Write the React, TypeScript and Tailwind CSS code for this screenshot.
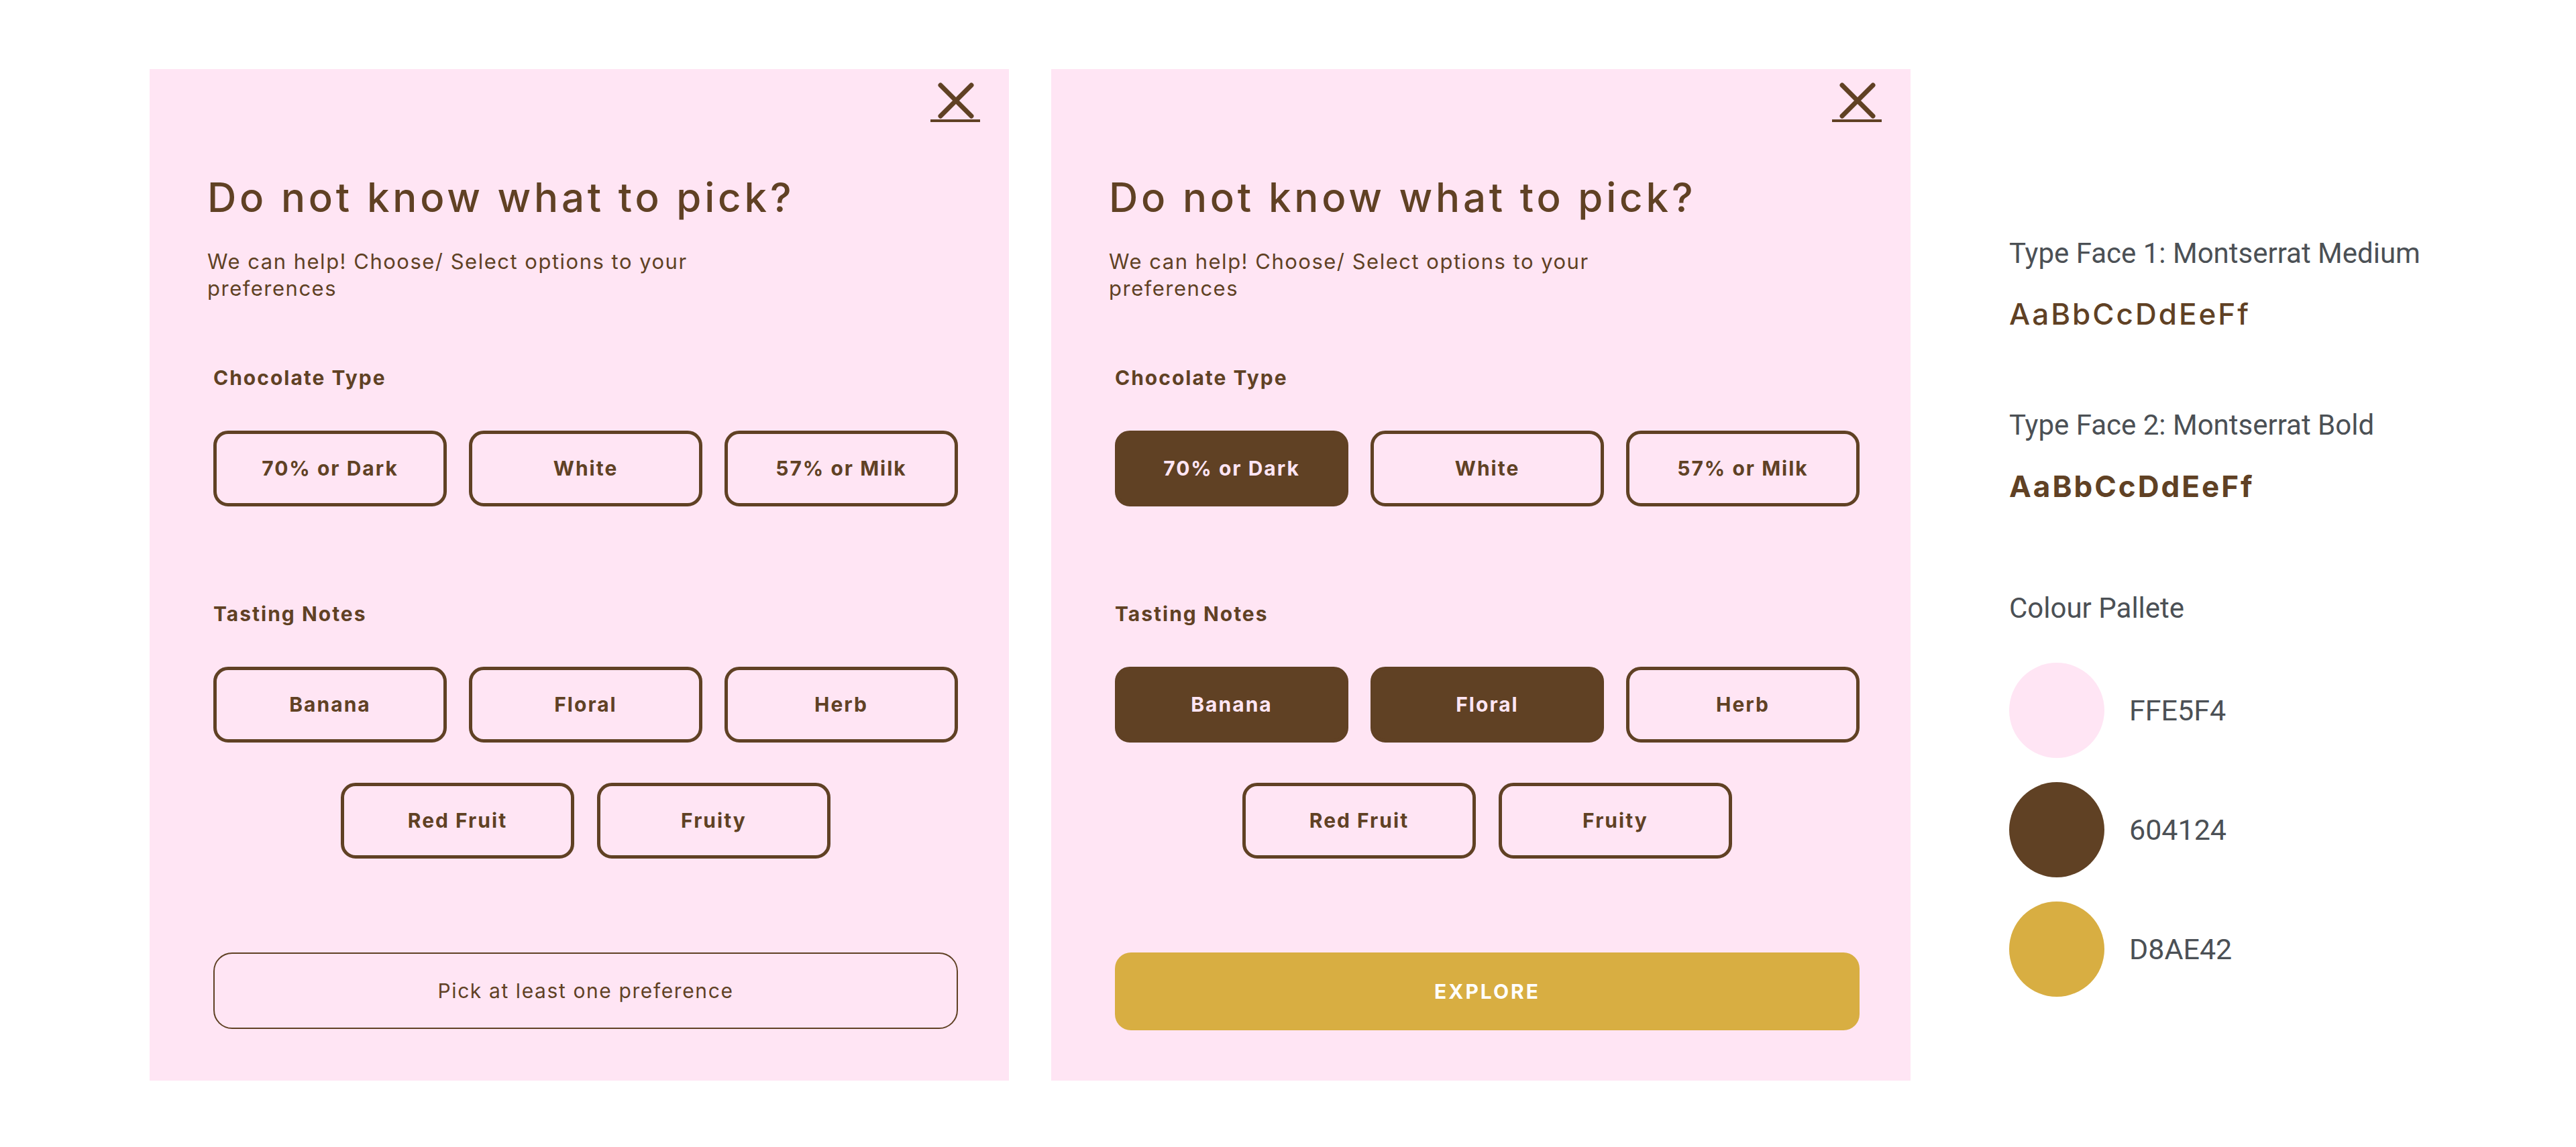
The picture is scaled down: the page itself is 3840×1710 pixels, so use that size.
import clsx from "clsx";

const chocolateTypes = ["70% or Dark", "White", "57% or Milk"];
const notesTop = ["Banana", "Floral", "Herb"];
const notesBottom = ["Red Fruit", "Fruity"];

const CloseIcon = () => (
  <svg width="76" height="61" viewBox="0 0 76 61" fill="none">
    <path d="M16 5 L62 51 M62 5 L16 51" stroke="#604124" strokeWidth="7" strokeLinecap="round" />
    <rect x="1" y="56" width="74" height="4" fill="#604124" />
  </svg>
);

const Option = ({ label, selected }: { label: string; selected?: boolean }) => (
  <button
    className={clsx(
      "h-[113px] w-[348px] rounded-[22px] border-[5px] border-[#604124] text-[30px] font-bold tracking-[2px]",
      selected ? "bg-[#604124] text-[#ffe5f4]" : "text-[#604124]"
    )}
  >
    {label}
  </button>
);

const Panel = ({ picked }: { picked: string[] }) => {
  const hasPick = picked.length > 0;

  return (
    <div className="flex w-[1281px] flex-col bg-[#ffe5f4] pt-[19px] pb-[75px] pl-[86px] pr-[42px] font-['Inter',sans-serif] text-[#604124]">
      {/* close */}
      <div className="flex justify-end">
        <CloseIcon />
      </div>

      <div className="pr-[34px]">
        <h1 className="mt-[81px] text-[60px] leading-[60px] font-medium tracking-[4.8px]">Do not know what to pick?</h1>
        <p className="mt-[46px] text-[31px] leading-[40px] tracking-[1.5px]">
          We can help! Choose/ Select options to your
          <br />
          preferences
        </p>

        <div className="pl-[9px]">
          <h2 className="mt-[98px] text-[30px] leading-[30px] font-bold tracking-[2px]">Chocolate Type</h2>
          <div className="mt-[64px] grid grid-cols-3 gap-[33px]">
            {chocolateTypes.map((c) => (
              <Option key={c} label={c} selected={picked.includes(c)} />
            ))}
          </div>

          <h2 className="mt-[145px] text-[30px] leading-[30px] font-bold tracking-[2px]">Tasting Notes</h2>
          <div className="mt-[64px] grid grid-cols-3 gap-[33px]">
            {notesTop.map((n) => (
              <Option key={n} label={n} selected={picked.includes(n)} />
            ))}
          </div>
          <div className="mt-[60px] flex justify-center gap-[34px]">
            {notesBottom.map((n) => (
              <Option key={n} label={n} selected={picked.includes(n)} />
            ))}
          </div>

          {hasPick ? (
            <button className="mt-[140px] h-[116px] w-full rounded-[24px] bg-[#d8ae42] text-[30px] font-bold tracking-[3px] text-white">
              EXPLORE
            </button>
          ) : (
            <button className="mt-[140px] h-[114px] w-full rounded-[28px] border-2 border-[#604124] text-[30px] tracking-[1.6px]">
              Pick at least one preference
            </button>
          )}
        </div>
      </div>
    </div>
  );
};

const Swatch = ({ color, code }: { color: string; code: string }) => (
  <div className="flex items-center gap-[37px]">
    <div className={clsx("h-[142px] w-[142px] rounded-full", color)} />
    <span className="text-[43px] leading-none">{code}</span>
  </div>
);

export default function App() {
  return (
    <div className="flex min-h-[1710px] w-[3840px] items-start bg-white pt-[103px] pl-[223px]">
      <div className="flex gap-[63px]">
        <Panel picked={[]} />
        <Panel picked={["70% or Dark", "Banana", "Floral"]} />
      </div>

      {/* style guide */}
      <div className="ml-[147px] flex flex-col pt-[253px] font-['Roboto',sans-serif] text-[#4b5055]">
        <div className="text-[42px] leading-[44px]">Type Face 1: Montserrat Medium</div>
        <div className="mt-[46px] font-['Inter',sans-serif] text-[44px] leading-[44px] font-medium tracking-[3px] text-[#604124]">
          AaBbCcDdEeFf
        </div>
        <div className="mt-[122px] text-[42px] leading-[44px]">Type Face 2: Montserrat Bold</div>
        <div className="mt-[47px] font-['Inter',sans-serif] text-[44px] leading-[44px] font-bold tracking-[3px] text-[#604124]">
          AaBbCcDdEeFf
        </div>
        <div className="mt-[138px] text-[42px] leading-[44px]">Colour Pallete</div>
        <div className="mt-[59px] flex flex-col gap-[36px]">
          <Swatch color="bg-[#ffe5f4]" code="FFE5F4" />
          <Swatch color="bg-[#604124]" code="604124" />
          <Swatch color="bg-[#d8ae42]" code="D8AE42" />
        </div>
      </div>
    </div>
  );
}
